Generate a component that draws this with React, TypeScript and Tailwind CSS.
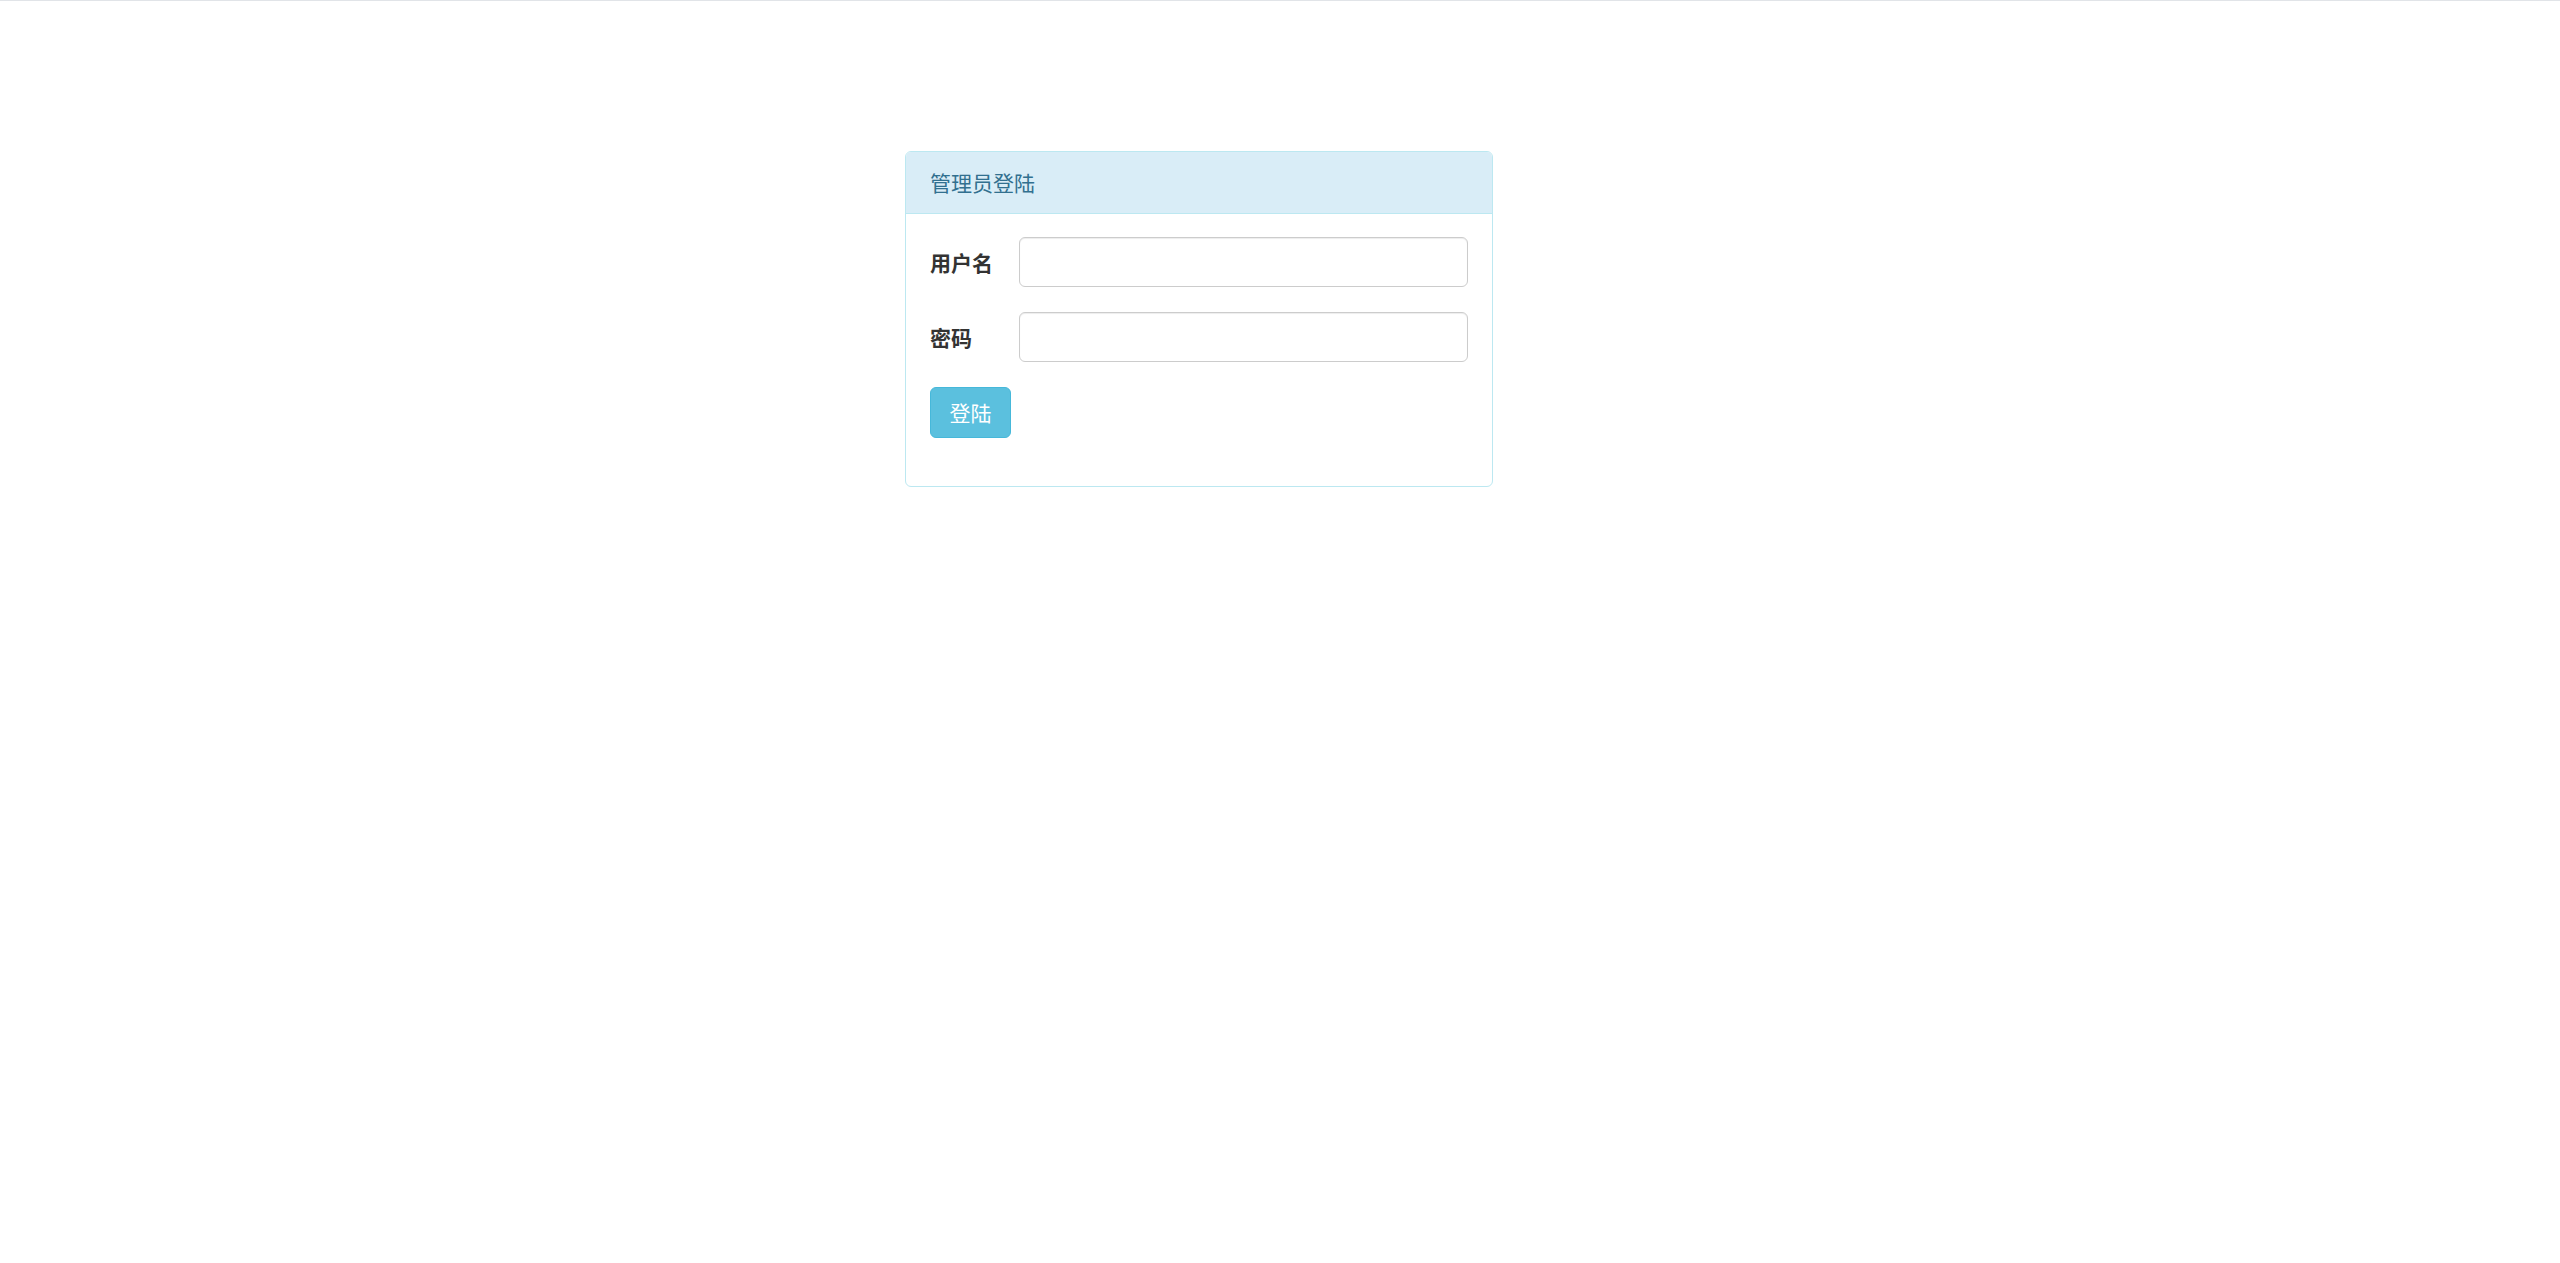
import React from 'react';

const font = { fontFamily: '"Noto Sans CJK SC", "Noto Sans", sans-serif' };

const Field: React.FC<{ label: string; type?: string }> = ({ label, type = 'text' }) => (
  <div className="flex items-center h-[50px]">
    <label className="w-[89px] shrink-0 text-[21px] font-bold text-[#333333] leading-none">{label}</label>
    <input
      type={type}
      className="w-[450px] h-[50px] rounded-[6px] border border-[#cccccc] bg-white px-3 shadow-[inset_0_1px_1px_rgba(0,0,0,0.075)] outline-none"
    />
  </div>
);

const App: React.FC = () => {
  return (
    <div className="min-h-screen bg-white border-t border-[#e1e4e8]" style={font}>
      <div className="pt-[150px] pl-[905px]">
        <div className="w-[588px] rounded-[6px] border border-[#bce8f1] bg-white">
          <div className="h-[62px] flex items-center px-[24px] bg-[#d9edf7] border-b border-[#bce8f1] rounded-t-[5px]">
            <h3 className="text-[21px] text-[#31708f] leading-none">管理员登陆</h3>
          </div>
          <div className="px-[24px] pt-[23px] pb-[48px]">
            <div className="flex flex-col gap-[25px]">
              <Field label="用户名" />
              <Field label="密码" type="password" />
              <div>
                <button className="w-[81px] h-[51px] rounded-[6px] border border-[#46b8da] bg-[#5bc0de] text-[21px] text-white leading-none">
                  登陆
                </button>
              </div>
            </div>
          </div>
        </div>
      </div>
    </div>
  );
};

export default App;
